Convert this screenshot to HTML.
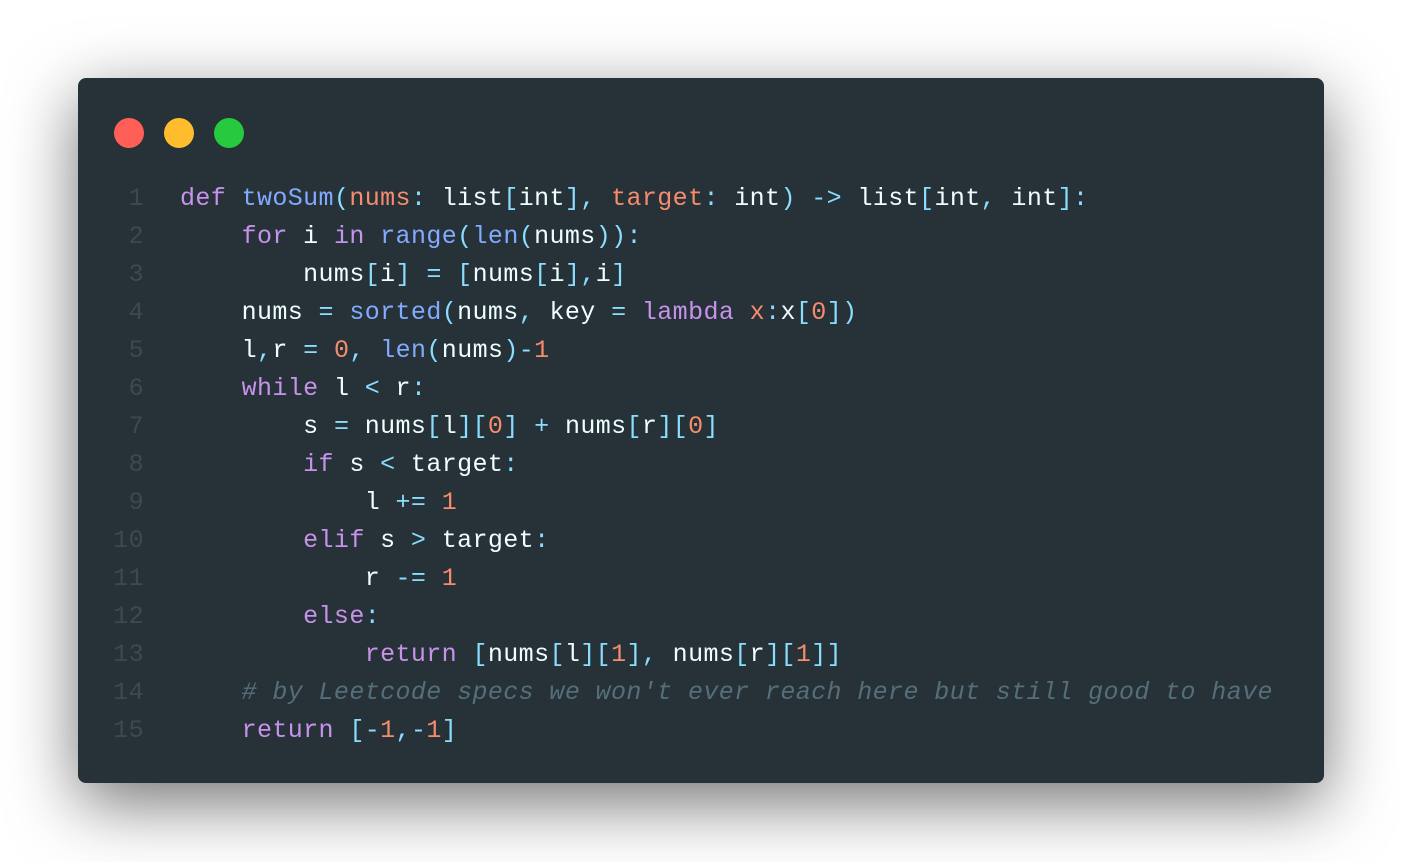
<!DOCTYPE html>
<html><head><style>
html,body{margin:0;padding:0;width:1402px;height:862px;background:#ffffff;overflow:hidden}
.win{position:absolute;left:78px;top:78px;width:1246px;height:705px;background:#263238;border-radius:8px;box-shadow:0 20px 68px rgba(0,0,0,0.55)}
.dot{position:absolute;top:40px;width:30px;height:30px;border-radius:50%}
pre{position:absolute;left:0;top:102px;margin:0;font-family:"Liberation Mono",monospace;font-size:25px;letter-spacing:0.39px;line-height:38px;color:#eeffff}
.ln{display:inline-block;width:66px;text-align:right;color:#3b4a52;margin-right:36px}
.k{color:#c792ea}.f{color:#82aaff}.p{color:#89ddff}.o{color:#f78c6c}.c{color:#546e7a;font-style:italic}
</style></head><body>
<div class="win">
<div class="dot" style="left:36px;background:#ff5f56"></div>
<div class="dot" style="left:86px;background:#ffbd2e"></div>
<div class="dot" style="left:136px;background:#27c93f"></div>
<pre><span class="ln">1</span><span class="k">def</span> <span class="f">twoSum</span><span class="p">(</span><span class="o">nums</span><span class="p">:</span> list<span class="p">[</span>int<span class="p">],</span> <span class="o">target</span><span class="p">:</span> int<span class="p">)</span> <span class="p">-&gt;</span> list<span class="p">[</span>int<span class="p">,</span> int<span class="p">]:</span>
<span class="ln">2</span>    <span class="k">for</span> i <span class="k">in</span> <span class="f">range</span><span class="p">(</span><span class="f">len</span><span class="p">(</span>nums<span class="p">)):</span>
<span class="ln">3</span>        nums<span class="p">[</span>i<span class="p">]</span> <span class="p">=</span> <span class="p">[</span>nums<span class="p">[</span>i<span class="p">],</span>i<span class="p">]</span>
<span class="ln">4</span>    nums <span class="p">=</span> <span class="f">sorted</span><span class="p">(</span>nums<span class="p">,</span> key <span class="p">=</span> <span class="k">lambda</span> <span class="o">x</span><span class="p">:</span>x<span class="p">[</span><span class="o">0</span><span class="p">])</span>
<span class="ln">5</span>    l<span class="p">,</span>r <span class="p">=</span> <span class="o">0</span><span class="p">,</span> <span class="f">len</span><span class="p">(</span>nums<span class="p">)-</span><span class="o">1</span>
<span class="ln">6</span>    <span class="k">while</span> l <span class="p">&lt;</span> r<span class="p">:</span>
<span class="ln">7</span>        s <span class="p">=</span> nums<span class="p">[</span>l<span class="p">][</span><span class="o">0</span><span class="p">]</span> <span class="p">+</span> nums<span class="p">[</span>r<span class="p">][</span><span class="o">0</span><span class="p">]</span>
<span class="ln">8</span>        <span class="k">if</span> s <span class="p">&lt;</span> target<span class="p">:</span>
<span class="ln">9</span>            l <span class="p">+=</span> <span class="o">1</span>
<span class="ln">10</span>        <span class="k">elif</span> s <span class="p">&gt;</span> target<span class="p">:</span>
<span class="ln">11</span>            r <span class="p">-=</span> <span class="o">1</span>
<span class="ln">12</span>        <span class="k">else</span><span class="p">:</span>
<span class="ln">13</span>            <span class="k">return</span> <span class="p">[</span>nums<span class="p">[</span>l<span class="p">][</span><span class="o">1</span><span class="p">],</span> nums<span class="p">[</span>r<span class="p">][</span><span class="o">1</span><span class="p">]]</span>
<span class="ln">14</span>    <span class="c"># by Leetcode specs we won't ever reach here but still good to have</span>
<span class="ln">15</span>    <span class="k">return</span> <span class="p">[-</span><span class="o">1</span><span class="p">,-</span><span class="o">1</span><span class="p">]</span></pre>
</div>
</body></html>
